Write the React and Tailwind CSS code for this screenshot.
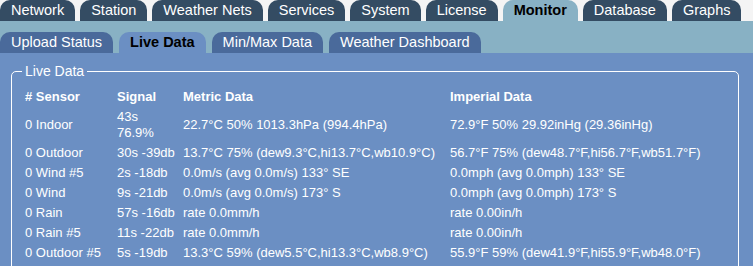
import React from "react";

const mainTabs = ["Network", "Station", "Weather Nets", "Services", "System", "License", "Monitor", "Database", "Graphs"];
const subTabs = ["Upload Status", "Live Data", "Min/Max Data", "Weather Dashboard"];

const rows = [
  { s: "0 Indoor", sig: ["43s", "76.9%"], m: "22.7°C 50% 1013.3hPa (994.4hPa)", i: "72.9°F 50% 29.92inHg (29.36inHg)" },
  { s: "0 Outdoor", sig: ["30s -39db"], m: "13.7°C 75% (dew9.3°C,hi13.7°C,wb10.9°C)", i: "56.7°F 75% (dew48.7°F,hi56.7°F,wb51.7°F)" },
  { s: "0 Wind #5", sig: ["2s -18db"], m: "0.0m/s (avg 0.0m/s) 133° SE", i: "0.0mph (avg 0.0mph) 133° SE" },
  { s: "0 Wind", sig: ["9s -21db"], m: "0.0m/s (avg 0.0m/s) 173° S", i: "0.0mph (avg 0.0mph) 173° S" },
  { s: "0 Rain", sig: ["57s -16db"], m: "rate 0.0mm/h", i: "rate 0.00in/h" },
  { s: "0 Rain #5", sig: ["11s -22db"], m: "rate 0.0mm/h", i: "rate 0.00in/h" },
  { s: "0 Outdoor #5", sig: ["5s -19db"], m: "13.3°C 59% (dew5.5°C,hi13.3°C,wb8.9°C)", i: "55.9°F 59% (dew41.9°F,hi55.9°F,wb48.0°F)" },
];

export default function App() {
  return (
    <div className="w-[753px] h-[266px] overflow-hidden bg-[#f4f4f4] font-['Liberation_Sans',Arial,sans-serif] text-white">
      <div className="flex gap-[5px] h-[21px]">
        {mainTabs.map((t) => (
          <div
            key={t}
            className={
              "h-[21px] px-[11px] rounded-t-[10px] text-[14.5px] leading-[21px] whitespace-nowrap " +
              (t === "Monitor" ? "bg-[#88b1c4] text-black font-bold" : "bg-[#344c63] text-white")
            }
          >
            {t}
          </div>
        ))}
      </div>
      <div className="bg-[#88b1c4] pt-[11px] flex gap-[6px] h-[32px]">
        {subTabs.map((t) => (
          <div
            key={t}
            className={
              "h-[21px] px-[11px] rounded-t-[10px] text-[14.5px] leading-[21px] whitespace-nowrap " +
              (t === "Live Data" ? "bg-[#6b8fc3] text-black font-bold" : "bg-[#4a6a9b] text-white")
            }
          >
            {t}
          </div>
        ))}
      </div>
      <div className="bg-[#6b8fc3] h-[213px] pt-[10px] pl-[11px] pr-[14px]">
        <fieldset className="border border-white rounded-[5px] px-[10px] pb-[10px] pt-[8px] min-w-0">
          <legend className="px-[3px] text-[14px] leading-[16px]">Live Data</legend>
          <table className="table-fixed border-collapse text-[13px] leading-[16px] w-full">
            <colgroup>
              <col className="w-[92px]" />
              <col className="w-[66px]" />
              <col className="w-[267px]" />
              <col />
            </colgroup>
            <thead>
              <tr>
                {["# Sensor", "Signal", "Metric Data", "Imperial Data"].map((h) => (
                  <th key={h} className="text-left font-bold pl-[3px] py-[2px] align-middle whitespace-nowrap">
                    {h}
                  </th>
                ))}
              </tr>
            </thead>
            <tbody>
              {rows.map((r) => (
                <tr key={r.s}>
                  <td className="pl-[3px] py-[2px] align-middle whitespace-nowrap">{r.s}</td>
                  <td className="pl-[3px] py-[2px] align-middle whitespace-nowrap">
                    {r.sig.map((x, k) => (
                      <div key={k}>{x}</div>
                    ))}
                  </td>
                  <td className="pl-[3px] py-[2px] align-middle whitespace-nowrap">{r.m}</td>
                  <td className="pl-[3px] py-[2px] align-middle whitespace-nowrap">{r.i}</td>
                </tr>
              ))}
            </tbody>
          </table>
        </fieldset>
      </div>
    </div>
  );
}
